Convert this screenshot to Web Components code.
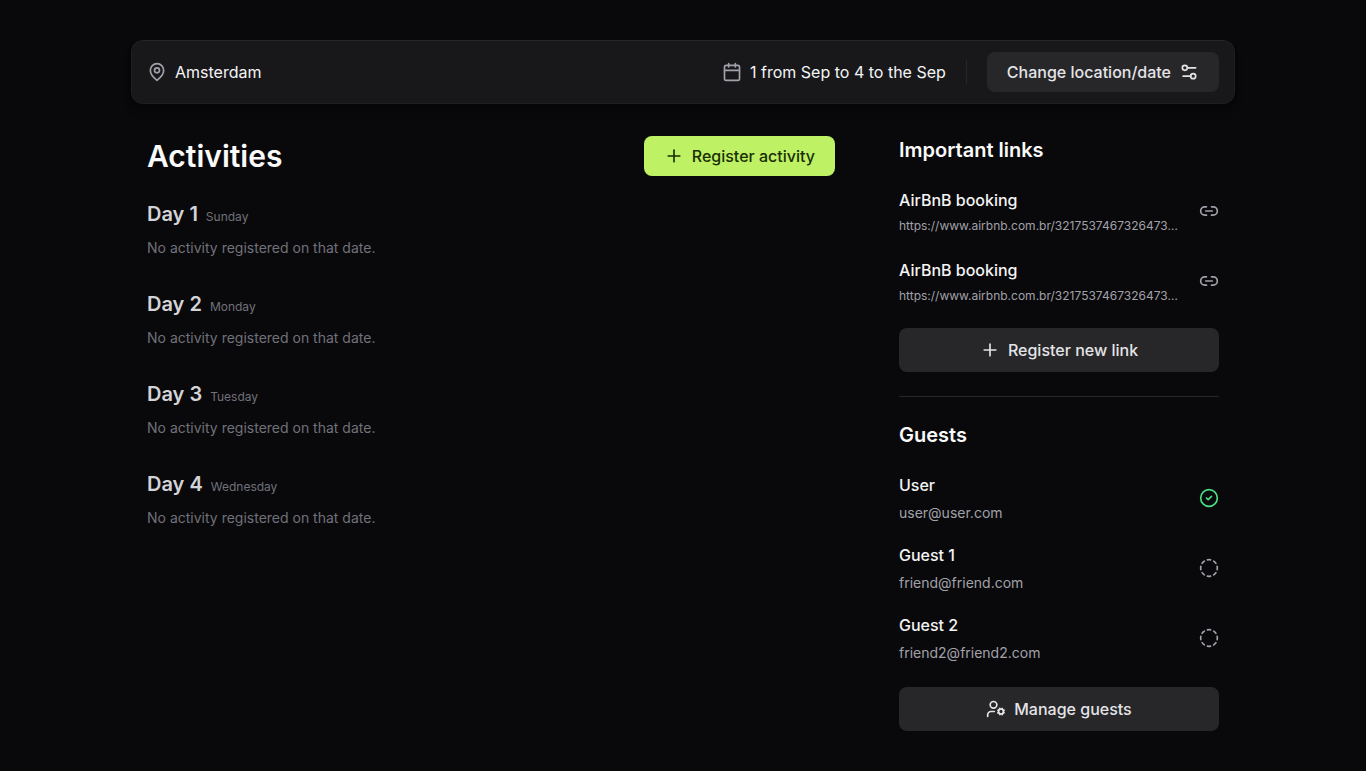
<!DOCTYPE html>
<html lang="en">
<head>
<meta charset="utf-8">
<title>Trip details</title>
<style>
  html { background: #09090b; }
  body { margin: 0; background: #09090b; color: #fafafa; font: 400 16px/24px Inter, sans-serif; }
</style>
</head>
<body>
<trip-page></trip-page>
<script>
const ICONS = {
  pin: '<path d="M20 10c0 6-8 12-8 12s-8-6-8-12a8 8 0 0 1 16 0Z"/><circle cx="12" cy="10" r="3"/>',
  calendar: '<path d="M8 2v4"/><path d="M16 2v4"/><rect width="18" height="18" x="3" y="4" rx="2"/><path d="M3 10h18"/>',
  settings: '<path d="M20 7h-9"/><path d="M14 17H5"/><circle cx="17" cy="17" r="3"/><circle cx="7" cy="7" r="3"/>',
  plus: '<path d="M5 12h14"/><path d="M12 5v14"/>',
  link: '<path d="M9 17H7A5 5 0 0 1 7 7h2"/><path d="M15 7h2a5 5 0 1 1 0 10h-2"/><line x1="8" x2="16" y1="12" y2="12"/>',
  check: '<circle cx="12" cy="12" r="10"/><path d="m9 12 2 2 4-4"/>',
  dashed: '<path d="M10.1 2.182a10 10 0 0 1 3.8 0"/><path d="M13.9 21.818a10 10 0 0 1-3.8 0"/><path d="M17.609 3.721a10 10 0 0 1 2.69 2.7"/><path d="M2.182 13.9a10 10 0 0 1 0-3.8"/><path d="M20.279 17.609a10 10 0 0 1-2.7 2.69"/><path d="M21.818 10.1a10 10 0 0 1 0 3.8"/><path d="M3.721 6.391a10 10 0 0 1 2.7-2.69"/><path d="M6.391 20.279a10 10 0 0 1-2.69-2.7"/>',
  userCog: '<circle cx="18" cy="15" r="3"/><circle cx="9" cy="7" r="4"/><path d="M10 15H6a4 4 0 0 0-4 4v2"/><path d="m21.7 16.4-.9-.3"/><path d="m15.2 13.9-.9-.3"/><path d="m16.6 18.7.3-.9"/><path d="m19.1 12.2.3-.9"/><path d="m19.6 18.7-.4-1"/><path d="m16.8 12.3-.4-1"/><path d="m14.3 16.6 1-.4"/><path d="m20.7 13.8 1-.4"/>'
};

function define(name, render) {
  customElements.define(name, class extends HTMLElement {
    constructor() {
      super();
      this.attachShadow({ mode: 'open' });
    }
    connectedCallback() {
      this.shadowRoot.innerHTML = render(this);
    }
  });
}

define('ui-icon', el => `
  <style>
    :host { display: block; width: 20px; height: 20px; flex: none; }
    svg { display: block; }
  </style>
  <svg width="20" height="20" viewBox="0 0 24 24" fill="none" stroke="currentColor" stroke-width="2" stroke-linecap="round" stroke-linejoin="round">${ICONS[el.getAttribute('name')]}</svg>`);

define('ui-button', () => `
  <style>
    :host { display: block; }
    button {
      display: flex; align-items: center; justify-content: center; gap: 8px;
      box-sizing: border-box; width: 100%; height: 40px; margin: 0; padding: 0 20px;
      border: 0; border-radius: 8px; background: #27272a; color: #e4e4e7;
      font: 500 16px/24px Inter, sans-serif; white-space: nowrap;
    }
    :host([variant="primary"]) button { background: #bef264; color: #1a2e05; }
    :host([size="full"]) button { height: 44px; }
  </style>
  <button type="button"><slot></slot></button>`);

define('trip-header', () => `
  <style>
    :host {
      display: flex; align-items: center; justify-content: space-between;
      height: 64px; padding: 0 16px; border-radius: 12px; background: #18181b;
      box-shadow: 0 8px 8px rgba(0,0,0,.1), 0 4px 4px rgba(0,0,0,.1), 0 2px 2px rgba(0,0,0,.1),
        0 0 0 1px rgba(0,0,0,.1), inset 0 0 0 1px rgba(255,255,255,.03), inset 0 1px 0 rgba(255,255,255,.03);
      color: #f4f4f5;
    }
    .item { display: flex; align-items: center; gap: 8px; }
    .item ui-icon { color: #a1a1aa; }
    .side { display: flex; align-items: center; gap: 20px; }
    .rule { width: 1px; height: 24px; background: #27272a; }
  </style>
  <div class="item"><ui-icon name="pin"></ui-icon><span>Amsterdam</span></div>
  <div class="side">
    <div class="item"><ui-icon name="calendar"></ui-icon><span>1 from Sep to 4 to the Sep</span></div>
    <div class="rule"></div>
    <ui-button>Change location/date<ui-icon name="settings"></ui-icon></ui-button>
  </div>`);

define('activity-day', el => `
  <style>
    :host { display: flex; flex-direction: column; gap: 10px; }
    .title { display: flex; align-items: baseline; gap: 8px; height: 28px; }
    .day { font-size: 20px; line-height: 28px; font-weight: 600; color: #d4d4d8; }
    .week { font-size: 12px; line-height: 16px; color: #71717a; }
    p { margin: 0; font-size: 14px; line-height: 20px; color: #71717a; }
  </style>
  <div class="title"><span class="day">${el.getAttribute('day')}</span><span class="week">${el.getAttribute('weekday')}</span></div>
  <p><slot></slot></p>`);

define('side-item', el => `
  <style>
    :host { display: flex; align-items: center; justify-content: space-between; gap: 16px; color: #a1a1aa; }
    .text { display: flex; flex-direction: column; gap: 6px; min-width: 0; flex: 1; }
    .name { font-weight: 500; color: #f4f4f5; }
    .detail { font-size: 14px; line-height: 20px; white-space: nowrap; }
    :host([kind="link"]) .detail { font-size: 12px; line-height: 16px; }
    ui-icon[name="check"] { color: #4ade80; }
  </style>
  <div class="text"><span class="name">${el.getAttribute('label')}</span><span class="detail"><slot></slot></span></div>
  <ui-icon name="${el.getAttribute('icon')}"></ui-icon>`);

define('side-section', el => `
  <style>
    :host { display: flex; flex-direction: column; gap: 24px; }
    h2 { margin: 0; font-size: 20px; line-height: 28px; font-weight: 600; color: #fafafa; }
    .list { display: flex; flex-direction: column; gap: var(--list-gap, 20px); }
  </style>
  <h2>${el.getAttribute('heading')}</h2>
  <div class="list"><slot></slot></div>
  <slot name="action"></slot>`);

define('trip-page', () => `
  <style>
    :host {
      display: flex; flex-direction: column; gap: 32px; box-sizing: border-box;
      max-width: 1152px; margin: 0 auto; padding: 40px 24px;
    }
    .columns { display: flex; gap: 64px; padding: 0 16px; }
    main { flex: 1; display: flex; flex-direction: column; gap: 24px; }
    .head { display: flex; align-items: center; justify-content: space-between; }
    h1 { margin: 0; font-size: 30px; line-height: 36px; font-weight: 600; }
    .days { display: flex; flex-direction: column; gap: 32px; }
    aside { width: 320px; display: flex; flex-direction: column; gap: 24px; }
    .rule { height: 1px; background: #27272a; }
    .links { --list-gap: 24px; }
  </style>
  <trip-header></trip-header>
  <div class="columns">
    <main>
      <div class="head">
        <h1>Activities</h1>
        <ui-button variant="primary"><ui-icon name="plus"></ui-icon>Register activity</ui-button>
      </div>
      <div class="days">
        <activity-day day="Day 1" weekday="Sunday">No activity registered on that date.</activity-day>
        <activity-day day="Day 2" weekday="Monday">No activity registered on that date.</activity-day>
        <activity-day day="Day 3" weekday="Tuesday">No activity registered on that date.</activity-day>
        <activity-day day="Day 4" weekday="Wednesday">No activity registered on that date.</activity-day>
      </div>
    </main>
    <aside>
      <side-section class="links" heading="Important links">
        <side-item kind="link" label="AirBnB booking" icon="link">https://www.airbnb.com.br/3217537467326473…</side-item>
        <side-item kind="link" label="AirBnB booking" icon="link">https://www.airbnb.com.br/3217537467326473…</side-item>
        <ui-button slot="action" size="full"><ui-icon name="plus"></ui-icon>Register new link</ui-button>
      </side-section>
      <div class="rule"></div>
      <side-section heading="Guests">
        <side-item label="User" icon="check">user@user.com</side-item>
        <side-item label="Guest 1" icon="dashed">friend@friend.com</side-item>
        <side-item label="Guest 2" icon="dashed">friend2@friend2.com</side-item>
        <ui-button slot="action" size="full"><ui-icon name="userCog"></ui-icon>Manage guests</ui-button>
      </side-section>
    </aside>
  </div>`);
</script>
</body>
</html>
